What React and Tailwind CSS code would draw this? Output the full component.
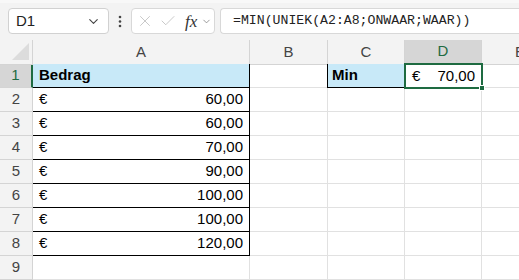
import { ChevronDown, X, Check } from 'lucide-react'

const rows = [
  ['Bedrag', null],
  ['€', '60,00'],
  ['€', '60,00'],
  ['€', '70,00'],
  ['€', '90,00'],
  ['€', '100,00'],
  ['€', '100,00'],
  ['€', '120,00'],
  [null, null],
]

const cols = ['A', 'B', 'C', 'D', 'E']
const grid = 'grid grid-cols-[33px_217px_78px_77px_77px_77px]'

function Toolbar() {
  return (
    <div className="flex h-[40px] items-start border-t-[3px] border-[#f8f8f8] bg-[#f3f3f3] pt-[5px]">
      <div className="ml-[8px] flex h-[26px] w-[101px] items-center justify-between rounded-[4px] border border-[#d1d1d1] bg-white pl-[7px] pr-[7px]">
        <span className="text-[15px] text-[#222]">D1</span>
        <ChevronDown size={15} strokeWidth={1.8} className="text-[#444]" />
      </div>
      <svg width="22" height="26" viewBox="0 0 22 26" className="shrink-0">
        <circle cx="11" cy="9" r="1.3" fill="#444" />
        <circle cx="11" cy="13.5" r="1.3" fill="#444" />
        <circle cx="11" cy="18" r="1.3" fill="#444" />
      </svg>
      <div className="flex h-[26px] w-[84px] items-center rounded-[4px] border border-[#d8d8d8] bg-white pl-[4px]">
        <X size={18} strokeWidth={1.1} className="text-[#bdbdbd]" />
        <Check size={18} strokeWidth={1.1} className="ml-[5px] text-[#bdbdbd]" />
        <span className="ml-[8px] font-['Liberation_Serif',serif] text-[17px] italic leading-none text-[#333]">
          fx
        </span>
        <ChevronDown size={11} strokeWidth={1.6} className="ml-[4px] text-[#777]" />
      </div>
      <div className="ml-[5px] flex h-[26px] flex-1 items-center rounded-l-[4px] border border-r-0 border-[#d8d8d8] bg-white pl-[12px]">
        <span className="font-['Liberation_Mono',monospace] text-[13.2px] text-[#222]">
          =MIN(UNIEK(A2:A8;ONWAAR;WAAR))
        </span>
      </div>
    </div>
  )
}

function Header() {
  return (
    <div className={`${grid} h-[24px] bg-[#f3f3f3]`}>
      <div className="relative border-r border-b border-[#d4d4d4]">
        <svg width="18" height="18" viewBox="0 0 18 18" className="absolute right-[2px] bottom-[3px]">
          <polygon points="17,0 17,17 0,17" fill="#dcdcdc" />
        </svg>
      </div>
      {cols.map((c) => {
        const sel = c === 'D'
        return (
          <div
            key={c}
            className={
              sel
                ? 'flex items-center justify-center border-r border-b-2 border-r-[#d4d4d4] border-b-[#1e6b41] bg-[#d6d6d6] text-[15px] text-[#1e6b41]'
                : 'flex items-center justify-center border-r border-b border-[#d4d4d4] text-[15px] text-[#444]'
            }
          >
            {c}
          </div>
        )
      })}
    </div>
  )
}

function Row({ n, a, v }) {
  const first = n === 1
  const inTable = n <= 8
  return (
    <div className={`${grid} h-[24px]`}>
      <div
        className={
          first
            ? 'flex items-center justify-center border-r-2 border-b border-r-[#1e6b41] border-b-[#d4d4d4] bg-[#d6d6d6] text-[15px] text-[#1e6b41]'
            : 'flex items-center justify-center border-r border-b border-[#d4d4d4] bg-[#f3f3f3] text-[15px] text-[#444]'
        }
      >
        {n}
      </div>
      <div
        className={
          inTable
            ? `flex items-center justify-between border-r border-b border-black px-[6px] text-[15px] text-black ${first ? 'bg-[#c8e9f8] font-bold' : 'bg-white'}`
            : 'border-r border-b border-[#e1e1e1]'
        }
      >
        <span>{a}</span>
        <span>{v}</span>
      </div>
      <div className="border-r border-b border-[#e1e1e1]" />
      {first ? (
        <div className="-ml-px flex items-center border-b border-l border-black bg-[#c8e9f8] pl-[4px] text-[15px] font-bold text-black">
          Min
        </div>
      ) : (
        <div className="border-r border-b border-[#e1e1e1]" />
      )}
      {first ? (
        <div className="relative flex items-center justify-between px-[7px] text-[15px] text-black">
          <span>€</span>
          <span>70,00</span>
          <div className="absolute -top-px -right-px -bottom-px -left-px border-2 border-[#1e6b41]" />
          <div className="absolute -right-[3px] -bottom-[3px] h-[6px] w-[6px] border border-white bg-[#1e6b41]" />
        </div>
      ) : (
        <div className="border-r border-b border-[#e1e1e1]" />
      )}
      <div className="border-b border-[#e1e1e1]" />
    </div>
  )
}

export default function App() {
  return (
    <div className="h-[280px] w-[519px] overflow-hidden bg-white font-['Liberation_Sans',Arial,sans-serif]">
      <Toolbar />
      <Header />
      {rows.map(([a, v], i) => (
        <Row key={i} n={i + 1} a={a} v={v} />
      ))}
    </div>
  )
}
